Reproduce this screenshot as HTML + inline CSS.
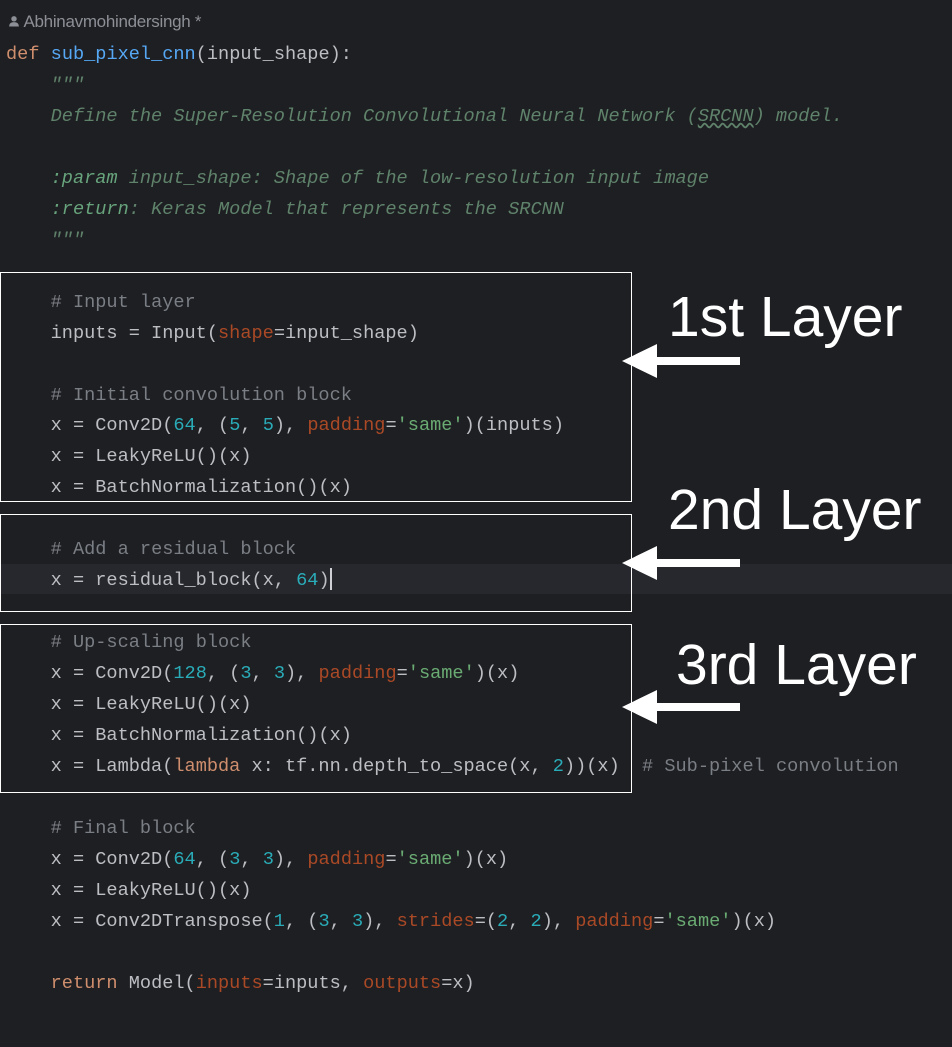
<!DOCTYPE html>
<html><head><meta charset="utf-8"><style>
html,body{margin:0;padding:0;background:#1e1f22;width:952px;height:1047px;overflow:hidden;position:relative}
.l{position:absolute;left:6px;height:31px;line-height:33px;font-family:"Liberation Mono",monospace;font-size:18.6px;color:#bcbec4;white-space:pre}
.k{color:#cf8e6d}.f{color:#56a8f5}.d{color:#5f826b;font-style:italic}.c{color:#7a7e85}.n{color:#2aacb8}.s{color:#6aab73}.p{color:#aa4926}
.box{position:absolute;left:0;border:1px solid #fff;width:630px}
.lab{position:absolute;font-family:"Liberation Sans",sans-serif;font-size:57px;color:#fff;line-height:1}
.hl{position:absolute;left:0;right:0;top:564px;height:30px;background:#26282e}
</style></head><body>
<div class="hl"></div>
<div style="position:absolute;left:8px;top:12px;font-family:'Liberation Sans',sans-serif;font-size:17px;letter-spacing:-0.3px;color:#8c8f96">
<svg width="12" height="12" viewBox="0 0 11 11" style="vertical-align:0px"><circle cx="5.5" cy="3.5" r="2.5" fill="#8c8f96"/><path d="M1 10.5 Q1 6.5 5.5 6.5 Q10 6.5 10 10.5Z" fill="#8c8f96"/></svg> Abhinavmohindersingh *</div>
<div class="l" style="top:38px"><span class="k">def</span> <span class="f">sub_pixel_cnn</span>(input_shape):</div>
<div class="l d" style="top:69px">    """</div>
<div class="l d" style="top:100px">    Define the Super-Resolution Convolutional Neural Network (<u style="text-decoration:underline wavy #5f826b">SRCNN</u>) model.</div>
<div class="l d" style="top:162px">    <b style="font-weight:normal;color:#67a37c">:param</b> input_shape: Shape of the low-resolution input image</div>
<div class="l d" style="top:193px">    <b style="font-weight:normal;color:#67a37c">:return</b>: Keras Model that represents the SRCNN</div>
<div class="l d" style="top:224px">    """</div>
<div class="l" style="top:286px">    <span class="c"># Input layer</span></div>
<div class="l" style="top:317px">    inputs = Input(<span class="p">shape</span>=input_shape)</div>
<div class="l" style="top:379px">    <span class="c"># Initial convolution block</span></div>
<div class="l" style="top:409px">    x = Conv2D(<span class="n">64</span>, (<span class="n">5</span>, <span class="n">5</span>), <span class="p">padding</span>=<span class="s">'same'</span>)(inputs)</div>
<div class="l" style="top:440px">    x = LeakyReLU()(x)</div>
<div class="l" style="top:471px">    x = BatchNormalization()(x)</div>
<div class="l" style="top:533px">    <span class="c"># Add a residual block</span></div>
<div class="l" style="top:564px">    x = residual_block(x, <span class="n">64</span>)<span style="display:inline-block;width:2px;height:22px;background:#ced0d6;vertical-align:-5px"></span></div>
<div class="l" style="top:626px">    <span class="c"># Up-scaling block</span></div>
<div class="l" style="top:657px">    x = Conv2D(<span class="n">128</span>, (<span class="n">3</span>, <span class="n">3</span>), <span class="p">padding</span>=<span class="s">'same'</span>)(x)</div>
<div class="l" style="top:688px">    x = LeakyReLU()(x)</div>
<div class="l" style="top:719px">    x = BatchNormalization()(x)</div>
<div class="l" style="top:750px">    x = Lambda(<span class="k">lambda</span> x: tf.nn.depth_to_space(x, <span class="n">2</span>))(x)  <span class="c"># Sub-pixel convolution</span></div>
<div class="l" style="top:812px">    <span class="c"># Final block</span></div>
<div class="l" style="top:843px">    x = Conv2D(<span class="n">64</span>, (<span class="n">3</span>, <span class="n">3</span>), <span class="p">padding</span>=<span class="s">'same'</span>)(x)</div>
<div class="l" style="top:874px">    x = LeakyReLU()(x)</div>
<div class="l" style="top:905px">    x = Conv2DTranspose(<span class="n">1</span>, (<span class="n">3</span>, <span class="n">3</span>), <span class="p">strides</span>=(<span class="n">2</span>, <span class="n">2</span>), <span class="p">padding</span>=<span class="s">'same'</span>)(x)</div>
<div class="l" style="top:967px">    <span class="k">return</span> Model(<span class="p">inputs</span>=inputs, <span class="p">outputs</span>=x)</div>
<div class="box" style="top:272px;height:228px"></div>
<div class="box" style="top:514px;height:96px"></div>
<div class="box" style="top:624px;height:167px"></div>
<div class="lab" style="left:668px;top:289px">1st Layer</div>
<div class="lab" style="left:668px;top:482px">2nd Layer</div>
<div class="lab" style="left:676px;top:637px">3rd Layer</div>
<svg style="position:absolute;left:0;top:0" width="952" height="1047">
<g fill="#fff">
<path d="M622 361 L657 344 L657 357 L740 357 L740 365 L657 365 L657 378Z"/>
<path d="M622 563 L657 546 L657 559 L740 559 L740 567 L657 567 L657 580Z"/>
<path d="M622 707 L657 690 L657 703 L740 703 L740 711 L657 711 L657 724Z"/>
</g></svg>
</body></html>
